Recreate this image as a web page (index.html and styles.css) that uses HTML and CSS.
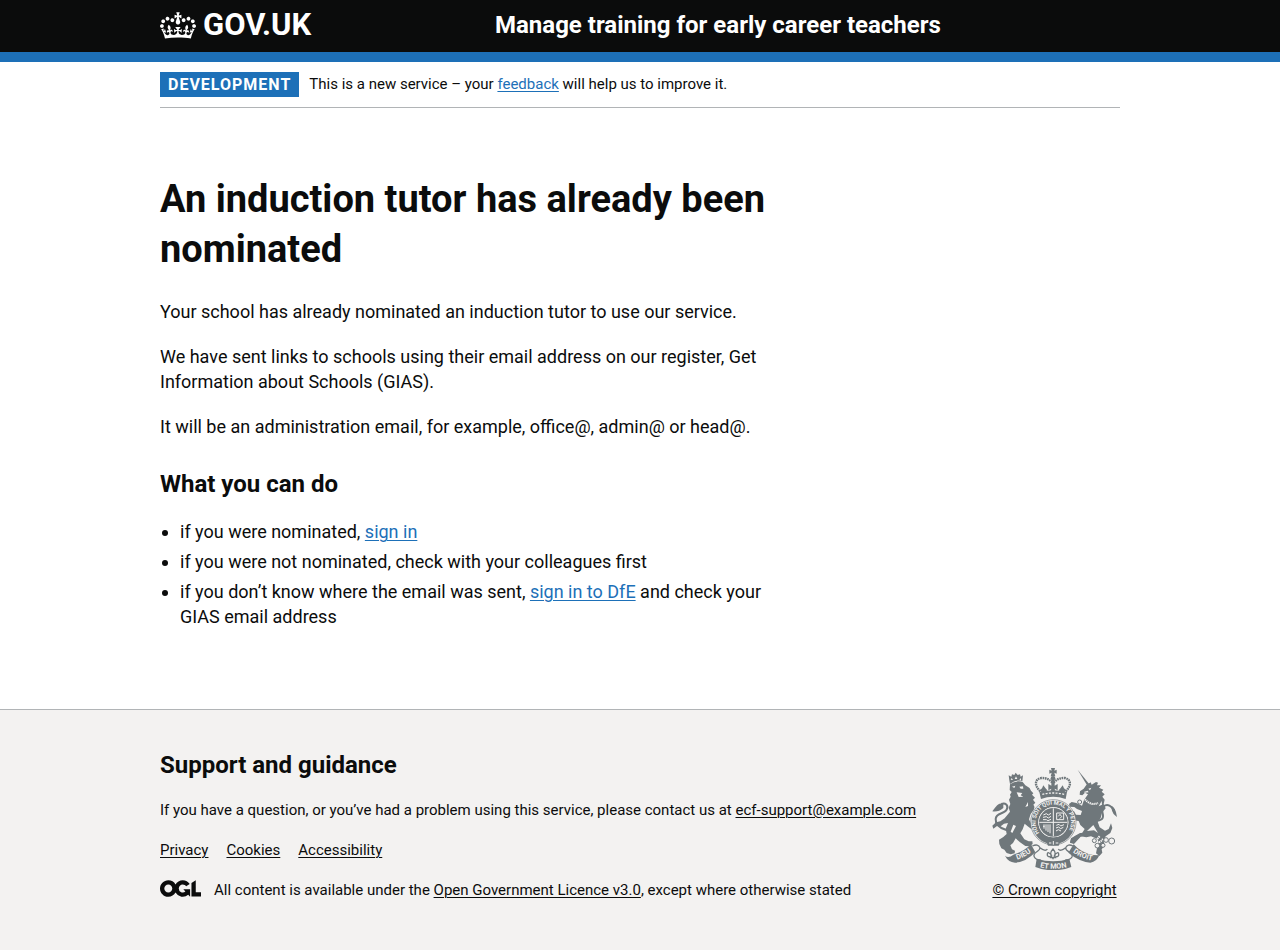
FILE: index.html
```html
<!DOCTYPE html>
<html lang="en">
<head>
<meta charset="utf-8">
<meta name="viewport" content="width=device-width, initial-scale=1">
<title>An induction tutor has already been nominated – Manage training for early career teachers</title>
<link rel="stylesheet" href="styles.css">
</head>
<body>
<header class="header">
  <div class="container header-grid">
    <a class="logo" href="#">
      <svg class="crown" viewBox="0 0 132 97" aria-hidden="true"><path fill="currentColor" fill-rule="evenodd" d="M25 30.2c3.5 1.5 7.7-.2 9.1-3.7 1.5-3.6-.2-7.8-3.9-9.2-3.6-1.4-7.6.3-9.1 3.9-1.4 3.5.3 7.5 3.9 9zM9 39.5c3.6 1.5 7.8-.2 9.2-3.7 1.5-3.6-.2-7.8-3.9-9.1-3.6-1.5-7.6.2-9.1 3.8-1.4 3.5.3 7.5 3.8 9zM4.4 57.2c3.5 1.5 7.7-.2 9.1-3.8 1.5-3.6-.2-7.7-3.9-9.1-3.5-1.5-7.6.3-9.1 3.8-1.4 3.5.3 7.6 3.9 9.1zm38.3-21.4c3.5 1.5 7.7-.2 9.1-3.8 1.5-3.6-.2-7.7-3.9-9.1-3.6-1.5-7.6.3-9.1 3.8-1.3 3.6.4 7.7 3.9 9.1zm64.4-5.6c-3.6 1.5-7.8-.2-9.1-3.7-1.5-3.6.2-7.8 3.8-9.2 3.6-1.4 7.7.3 9.2 3.9 1.3 3.5-.4 7.5-3.9 9zm15.9 9.3c-3.6 1.5-7.7-.2-9.1-3.7-1.5-3.6.2-7.8 3.7-9.1 3.6-1.5 7.7.2 9.2 3.8 1.5 3.5-.3 7.5-3.8 9zm4.7 17.7c-3.6 1.5-7.8-.2-9.2-3.8-1.5-3.6.2-7.7 3.9-9.1 3.6-1.5 7.7.3 9.2 3.8 1.3 3.5-.4 7.6-3.9 9.1zM89.3 35.8c-3.6 1.5-7.8-.2-9.2-3.8-1.4-3.6.2-7.7 3.9-9.1 3.6-1.5 7.7.3 9.2 3.8 1.4 3.6-.3 7.7-3.9 9.1zM69.7 17.7l8.9 4.7V9.3l-8.9 2.8c-.2-.3-.5-.6-.9-.9L72.4 0H59.6l3.5 11.2c-.3.3-.6.5-.9.9l-8.8-2.8v13.1l8.8-4.7c.3.3.6.7.9.9l-5 15.4v.1c-.2.8-.4 1.6-.4 2.4 0 4.1 3.1 7.5 7 8.1h.2c.3 0 .7.1 1 .1.4 0 .7 0 1-.1h.2c4-.6 7.1-4.1 7.1-8.1 0-.8-.1-1.7-.4-2.4V34l-5.1-15.4c.4-.2.7-.6 1-.9zM66 92.8c16.9 0 32.8 1.1 47.1 3.2 4-16.9 8.9-26.7 14-33.5l-9.6-3.4c1 4.9 1.1 7.2 0 10.2-1.5-1.4-3-4.3-4.2-8.7L108.6 76c2.8-2 5-3.2 7.5-3.3-4.4 9.4-10 11.9-13.6 11.2-4.3-.8-6.3-4.6-5.6-7.9 1-4.7 5.7-5.9 8-.5 4.3-8.7-3-11.4-7.6-8.8 7.1-7.2 7.9-13.5 2.1-21.1-8 6.1-8.1 12.3-4.5 20.8-4.7-5.4-12.1-2.5-9.5 6.2 3.4-5.2 7.9-2 7.2 3.1-.6 4.3-6.4 7.8-13.5 7.2-10.3-.9-10.9-8-11.2-13.8 2.5-.5 7.1 1.8 11 7.3L80.2 60c-4.1 4.4-8 5.3-12.3 5.4 1.4-4.4 8-11.6 8-11.6H55.5s6.4 7.2 7.9 11.6c-4.2-.1-8-1-12.3-5.4l1.4 16.4c3.9-5.5 8.5-7.7 10.9-7.3-.3 5.8-.9 12.8-11.1 13.8-7.2.6-12.9-2.9-13.5-7.2-.7-5 3.8-8.3 7.1-3.1 2.7-8.7-4.6-11.6-9.4-6.2 3.7-8.5 3.6-14.7-4.6-20.8-5.8 7.6-5 13.9 2.2 21.1-4.7-2.6-11.9.1-7.7 8.8 2.3-5.5 7.1-4.2 8.1.5.7 3.3-1.3 7.1-5.7 7.9-3.5.7-9-1.8-13.5-11.2 2.5.1 4.7 1.3 7.5 3.3l-4.7-15.4c-1.2 4.4-2.7 7.2-4.3 8.7-1.1-3-.9-5.3 0-10.2l-9.5 3.4c5 6.9 9.9 16.7 14 33.5 14.8-2.1 30.8-3.2 47.7-3.2z"/></svg>
      <span>GOV.UK</span>
    </a>
    <a class="service-name" href="#">Manage training for early career teachers</a>
  </div>
</header>
<div class="page">
  <div class="container">
    <div class="phase-banner">
      <strong class="tag">Development</strong>
      <span>This is a new service – your <a class="link" href="#">feedback</a> will help us to improve it.</span>
    </div>
    <main class="main">
      <h1 class="title">An induction tutor has already been nominated</h1>
      <p class="body">Your school has already nominated an induction tutor to use our service.</p>
      <p class="body">We have sent links to schools using their email address on our register, Get Information about Schools (GIAS).</p>
      <p class="body">It will be an administration email, for example, office@, admin@ or head@.</p>
      <h2 class="heading section-heading">What you can do</h2>
      <ul class="list">
        <li>if you were nominated, <a class="link" href="#">sign in</a></li>
        <li>if you were not nominated, check with your colleagues first</li>
        <li>if you don’t know where the email was sent, <a class="link" href="#">sign in to DfE</a> and check your GIAS email address</li>
      </ul>
    </main>
  </div>
</div>
<footer class="footer">
  <div class="container footer-grid">
    <div class="footer-meta">
      <h2 class="heading">Support and guidance</h2>
      <p>If you have a question, or you’ve had a problem using this service, please contact us at <a href="#">ecf-support@example.com</a></p>
      <ul class="footer-links">
        <li><a href="#">Privacy</a></li>
        <li><a href="#">Cookies</a></li>
        <li><a href="#">Accessibility</a></li>
      </ul>
      <div class="licence">
        <svg class="ogl" viewBox="0 0 483.2 195.7" aria-hidden="true"><path fill="currentColor" d="M421.5 142.8V.1l-50.7 32.3v161.1h112.4v-50.7zm-122.3-9.6A47.12 47.12 0 0 1 221 97.8c0-26 21.1-47.1 47.1-47.1 16.7 0 31.4 8.7 39.7 21.8l42.7-27.2A97.63 97.63 0 0 0 268.1 0c-36.5 0-68.3 20.1-85.1 49.7A98 98 0 0 0 97.8 0C43.9 0 0 43.9 0 97.8s43.9 97.8 97.8 97.8c36.5 0 68.3-20.1 85.1-49.7a97.76 97.76 0 0 0 149.6 25.4l19.4 22.2h3v-87.8h-80l24.3 27.5zM97.8 145c-26 0-47.1-21.1-47.1-47.1s21.1-47.1 47.1-47.1 47.1 21.1 47.1 47.1S123.8 145 97.8 145"/></svg>
        <span>All content is available under the <a href="#">Open Government Licence v3.0</a>, except where otherwise stated</span>
      </div>
    </div>
    <a class="copyright" href="#">
      <svg class="crest" viewBox="36 24 375 306" aria-hidden="true">
        <defs>
          <path id="garter" d="M178 219A53 53 0 1 1 262 219"/>
          <path id="scroll-left" d="M104 301Q134 293 160 272"/>
          <path id="scroll-mid" d="M168 319Q220 334 272 319"/>
          <path id="scroll-right" d="M274 273Q302 296 342 303"/>
        </defs>
        <g class="ink">
          <!-- lion -->
          <path d="M88 61L86 46L94 50L96 43L103 45L107 38L113 45L120 43L122 50L129 46L127 64Q108 56 90 72Z"/>
          <path d="M90 73Q108 60 128 66L136 76Q149 82 153 92L160 100L156 104L165 113L159 119L166 128L160 134Q166 140 161 150L152 162L147 178L151 187L165 194L164 207L153 206L143 199L134 191L128 208L121 220L133 238L146 244L157 244L158 252L149 259L136 258L120 247L107 235L99 249L91 256L96 268L105 272L104 280L92 283L80 279L73 269L64 265L58 252L57 239L70 231L80 222L77 206L84 189L72 191L60 200L52 197L40 206L37 197L48 187L61 184L74 175L90 155L86 143L91 132L87 119L92 110L90 104L95 96L89 90Z"/>
        </g>
        <g class="line">
          <path d="M79 210C59 204 46 192 47 177C48 157 73 163 80 149C87 135 75 127 64 132"/>
          <path d="M323 190C337 180 354 187 365 178C378 166 357 151 371 139C382 130 396 138 402 151"/>
        </g>
        <g class="ink">
          <path d="M70 130C51 130 49 140 37 154Q55 157 70 144ZM391 138Q407 139 411 171Q397 162 395 148Z"/>
          <!-- unicorn -->
          <path d="M293 29L328 73L322 77Z"/>
          <path d="M319 75L332 67L335 74L348 66L354 68L351 76L363 76L357 83L370 89L365 95L374 103L367 110L374 119L371 132L377 145L366 158L362 174L353 185L359 202L375 212L386 207L393 190L397 204L391 219L377 229L371 240L373 258L365 268L367 278L358 288L348 280L351 265L357 253L352 237L333 229L319 232L302 229L290 239L282 252L270 248L273 238L287 227L307 218L314 207L301 195L296 183L283 181L273 167L266 160L268 151L282 154L288 164L302 165L306 153L291 147L283 141L269 140L267 132L275 126L289 129L306 137L312 120L324 103L315 98L307 106L299 104L300 94L311 86Z"/>
          <path d="M273 235L300 219L318 218L320 225L302 230L284 250L270 248Z"/>
        </g>
        <g class="paper">
          <path d="M92 59L95 54L99 60ZM104 57L108 49L112 57ZM118 60L122 54L124 62ZM96 80L106 77L103 84ZM118 80L129 79L130 86L122 86ZM110 97L127 99L122 106L130 110L116 111ZM144 126L136 141L144 138ZM100 194L92 215L97 219L108 198ZM325 86L334 83L330 91ZM311 96L323 92L326 97L315 98ZM365 123L356 139L366 134ZM340 195L321 213L342 211L354 219Z"/>
        </g>
        <path class="chain" d="M311 113Q330 139 354 129M298 129Q294 115 306 119M359 229C340 247 358 255 370 235"/>
        <g class="rings"><circle cx="343" cy="242" r="6"/><circle cx="352" cy="257" r="7"/><circle cx="369" cy="256" r="6"/><circle cx="378" cy="240" r="7"/><circle cx="395" cy="243" r="9"/><circle cx="299" cy="126" r="6"/></g>
        <!-- royal crown -->
        <g class="beads"><path d="M181 94C162 77 164 57 184 54Q205 53 218 69M257 94C276 77 273 57 254 54Q233 53 220 69"/></g>
        <g class="ink">
          <path d="M213 24H225L223 32L230 29V41L223 38L226 49H212L215 38L208 41V29L215 32Z"/>
          <circle cx="219" cy="55" r="7"/>
          <path d="M214 60H224V77L233 72V91L224 86L226 94H212L214 86L205 91V72L214 77ZM190 76L196 84L202 91L194 97H185L179 91L186 85ZM248 76L242 84L236 91L244 97H253L259 91L252 85Z"/>
          <path d="M178 96Q219 86 261 96L257 117Q219 104 183 117Z"/>
        </g>
        <path class="dots" d="M187 103Q219 95 253 103"/>
        <!-- garter and shield -->
        <circle class="belt-edge" cx="220" cy="187" r="68"/>
        <circle class="belt" cx="220" cy="187" r="55"/>
        <circle class="paper" cx="220" cy="187" r="45"/>
        <circle class="ink" cx="220" cy="187" r="43"/>
        <text class="motto garter"><textPath href="#garter">HONI SOIT QUI MAL Y PENSE</textPath></text>
        <path class="detail" d="M220 145V229M178 187H262"/>
        <g class="detail">
          <path d="M190 165L199 161L205 165L213 160M189 172L199 170L205 174L213 169M189 179H199L204 182L213 178"/>
          <path d="M230 159H251V179H230ZM235 169L240 163L245 170L239 176"/>
          <path d="M192 193V206M198 193V212M204 193V216M210 193V220M189 199H194"/>
          <path d="M229 196L237 193L242 198L252 194M228 204L236 201L242 206L250 202M228 213L235 209L243 213"/>
        </g>
        <path class="ink" d="M198 242L220 235L242 242L236 257H204Z"/>
        <path class="detail" d="M207 249H214M220 243V254M227 249H235"/>
        <!-- scroll -->
        <g class="ink">
          <path d="M75 287Q85 297 100 284Q130 276 153 253L166 277Q137 307 105 308Q84 306 75 287Z"/>
          <path d="M281 253Q304 279 339 285L358 286Q350 306 331 308Q298 305 265 278Z"/>
          <path d="M170 296Q220 311 268 296L274 321Q220 341 166 321Z"/>
        </g>
        <path class="ribbon" d="M157 258Q174 250 180 263C181 276 155 276 163 291Q168 300 182 300M279 258Q263 250 257 263C255 276 282 276 276 291Q270 300 256 300M180 263Q196 276 202 267M257 263Q241 276 235 267"/>
        <g class="fleur"><path d="M219 267Q205 281 219 296Q232 281 219 267ZM216 287Q201 269 202 286Q204 292 212 289M222 287Q237 269 236 286Q234 292 226 289M209 293H229"/></g>
        <text class="motto"><textPath href="#scroll-left" startOffset="50%">DIEU</textPath></text>
        <text class="motto"><textPath href="#scroll-mid" startOffset="50%">ET MON</textPath></text>
        <text class="motto"><textPath href="#scroll-right" startOffset="50%">DROIT</textPath></text>
      </svg>
      <span>© Crown copyright</span>
    </a>
  </div>
</footer>
</body>
</html>
```
FILE: styles.css
```css
* { box-sizing: border-box; }
body {
  margin: 0;
  min-height: 100vh;
  display: flex;
  flex-direction: column;
  background: #f3f2f1;
  color: #0b0c0c;
  font: 18px/25px Roboto, "Liberation Sans", sans-serif;
}
h1, h2, p, ul { margin: 0; }
.page { background: #fff; }
.container { width: 100%; max-width: 990px; margin: 0 auto; padding: 0 15px; }
.header { background: #0b0c0c; border-bottom: 10px solid #1d70b8; color: #fff; }
.header-grid { display: grid; grid-template-columns: 1fr 2fr; align-items: center; padding-bottom: 2px; }
.header a { color: inherit; text-decoration: none; font-weight: 700; }
.logo { display: flex; align-items: center; gap: 7px; font-size: 31px; line-height: 50px; }
.crown { width: 36px; height: 27px; }
.service-name { padding-left: 15px; font-size: 24px; line-height: 50px; }
.phase-banner { display: flex; align-items: center; gap: 10px; padding: 10px 0; border-bottom: 1px solid #b1b4b6; font-size: 15px; }
.tag { padding: 0 8px; background: #1d70b8; color: #fff; font-size: 16px; letter-spacing: 1px; text-transform: uppercase; }
.link { color: #1d70b8; }
a { text-underline-offset: 2px; text-decoration-thickness: 1px; }
.main { max-width: 625px; padding: 66px 0 80px; }
.title { margin-bottom: 25px; font-size: 38px; line-height: 50px; }
.body { margin-bottom: 20px; }
.heading { margin-bottom: 20px; font-size: 24px; line-height: 30px; }
.section-heading { padding-top: 10px; }
.list { display: grid; gap: 5px; padding-left: 20px; }
.footer { flex: 1; padding: 40px 0 50px; border-top: 1px solid #b1b4b6; background: #f3f2f1; font-size: 15px; line-height: 20px; }
.footer a { color: inherit; }
.footer-grid { display: flex; align-items: flex-end; justify-content: space-between; gap: 30px; }
.footer-meta p { margin-bottom: 20px; }
.footer-links { display: flex; flex-wrap: wrap; gap: 18px; margin-bottom: 20px; padding: 0; list-style: none; }
.licence { display: flex; align-items: flex-start; gap: 13px; }
.ogl { width: 41px; height: 17px; flex: none; }
.copyright { display: flex; flex: none; flex-direction: column; align-items: center; gap: 10px; min-width: 131px; }
.crest { width: 125px; height: 102px; }
.ink { fill: #6f777b; }
.paper { fill: #f3f2f1; }
.line { fill: none; stroke: #6f777b; stroke-width: 6; }
.chain { fill: none; stroke: #f3f2f1; stroke-width: 6; stroke-dasharray: 4 2; }
.rings { fill: #f3f2f1; stroke: #6f777b; stroke-width: 3; }
.beads { fill: none; stroke: #6f777b; stroke-width: 7; stroke-dasharray: 5 2; }
.dots { fill: none; stroke: #f3f2f1; stroke-width: 4; stroke-dasharray: 6 4; }
.belt-edge { fill: #f3f2f1; stroke: #6f777b; stroke-width: 2; }
.belt { fill: none; stroke: #6f777b; stroke-width: 20; }
.detail { fill: none; stroke: #f3f2f1; stroke-width: 3; }
.ribbon { fill: none; stroke: #6f777b; stroke-width: 4; }
.fleur { fill: none; stroke: #6f777b; stroke-width: 4; }
.motto { fill: #f3f2f1; font: 700 22px Roboto, sans-serif; text-anchor: middle; }
.garter { font-size: 17px; text-anchor: start; }
```
